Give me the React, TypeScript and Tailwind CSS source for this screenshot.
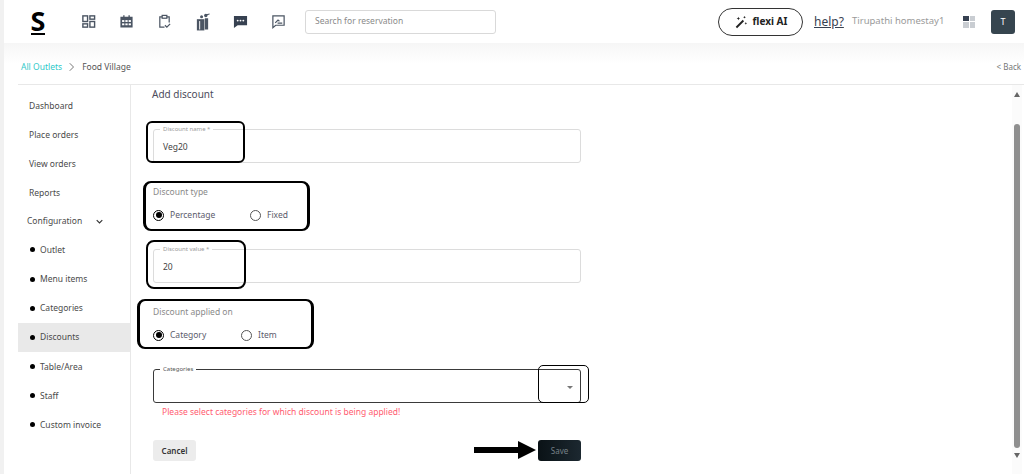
import React from "react";

const font = { fontFamily: '"Noto Sans", sans-serif' };

function Fieldset({ label, value, dark }: { label: string; value?: string; dark?: boolean }) {
  return (
    <div className={`relative h-[34px] w-[428px] rounded-[3px] border ${dark ? "border-[#3a3a3a]" : "border-[#dcdcdc]"}`}>
      <span className={`absolute -top-[5px] left-[6px] bg-white px-[3px] text-[6px] leading-[8px] ${dark ? "text-[#555]" : "text-[#9a9a9a]"}`}>{label}</span>
      {value && <span className="absolute left-[9px] top-[11px] text-[8.5px] leading-[12px] text-[#444]">{value}</span>}
      {dark && <span className="absolute right-[7px] top-[16px] h-0 w-0 border-x-[3px] border-t-[3px] border-x-transparent border-t-[#777]" />}
    </div>
  );
}

function Radio({ label, on, w }: { label: string; on?: boolean; w: string }) {
  return (
    <div className={`flex items-center gap-[6px] ${w}`}>
      <span className={`flex h-[11px] w-[11px] items-center justify-center rounded-full border ${on ? "border-black" : "border-[#555]"}`}>
        {on && <span className="h-[6px] w-[6px] rounded-full bg-black" />}
      </span>
      <span className="text-[8.5px] leading-[12px] text-[#5b5b6b]">{label}</span>
    </div>
  );
}

function RadioGroup({ title, a, b, w }: { title: string; a: string; b: string; w: string }) {
  return (
    <div className="flex h-[50px] flex-col">
      <div className="mt-[5px] text-[8.5px] leading-[12px] text-[#8a8a8a]">{title}</div>
      <div className="mt-[11px] flex items-center">
        <Radio label={a} on w={w} />
        <Radio label={b} w="w-auto" />
      </div>
    </div>
  );
}

function Nav({ label, dot, active }: { label: string; dot?: boolean; active?: boolean }) {
  return (
    <div className={`flex h-[29.2px] items-center ${active ? "bg-[#e9e9e9]" : ""} ${dot ? "pl-[12px]" : "pl-[11px]"}`}>
      {dot && <span className="mr-[5px] h-[5px] w-[5px] rounded-full bg-black" />}
      <span className="text-[8.5px] leading-[12px] text-[#4a4a4a]">{label}</span>
    </div>
  );
}

function Note({ className }: { className: string }) {
  return <div className={`pointer-events-none absolute border-black ${className}`} />;
}

const icon = "h-[15px] w-[15px] text-[#4b5563]";

export default function App() {
  return (
    <div className="relative h-[474px] w-[1024px] overflow-hidden bg-white" style={font}>
      <div className="flex h-full flex-col border-l-[4px] border-[#f1f1f1]">
        <header className="flex h-[43px] items-center">
          <div className="ml-[24px] flex w-[20px] flex-col items-center">
            <span className="text-[27px] font-bold leading-[24px] text-black">S</span>
            <span className="h-[2px] w-[14px] bg-black" />
          </div>
          <div className="ml-[33px] flex items-center gap-[23px]">
            <svg viewBox="0 0 16 16" className={icon} fill="none" stroke="currentColor" strokeWidth="1.5"><rect x="2" y="2" width="5" height="6" /><rect x="9.5" y="2" width="5" height="3.5" /><rect x="2" y="10.5" width="5" height="3.5" /><rect x="9.5" y="8" width="5" height="6" /></svg>
            <svg viewBox="0 0 16 16" className={icon} fill="currentColor"><path d="M1.5 3h3V1.2h1.4V3h4.2V1.2h1.4V3h3v11.5h-13z" /><g fill="#fff"><rect x="3.3" y="6.5" width="2.4" height="2" /><rect x="6.8" y="6.5" width="2.4" height="2" /><rect x="10.3" y="6.5" width="2.4" height="2" /><rect x="3.3" y="10" width="2.4" height="2" /><rect x="6.8" y="10" width="2.4" height="2" /><rect x="10.3" y="10" width="2.4" height="2" /></g></svg>
            <svg viewBox="0 0 16 16" className={icon} fill="none" stroke="currentColor" strokeWidth="1.3"><path d="M5.5 3H3v11h5M10.5 3H13v6" /><rect x="5.5" y="1.5" width="5" height="3" /><path d="M8.5 12l2 2 3.5-3.5" /></svg>
            <svg viewBox="0 0 16 20" className="h-[20px] w-[15px] text-[#4b5563]" fill="currentColor"><rect x="2" y="7" width="8" height="12" /><circle cx="7" cy="4.5" r="1.6" /><circle cx="11.5" cy="3" r="1.8" /><rect x="10.5" y="6" width="3.5" height="12" /><path d="M11 2l4.5-1.2v1.2l-4.5 1.2z" /><rect x="4.5" y="9" width="1" height="9" fill="#fff" /></svg>
            <svg viewBox="0 0 16 16" className="h-[15px] w-[15px] text-[#374151]" fill="currentColor"><path d="M1 2h14v10H5l-4 3z" /><g fill="#fff"><circle cx="5" cy="7" r="1" /><circle cx="8" cy="7" r="1" /><circle cx="11" cy="7" r="1" /></g></svg>
            <svg viewBox="0 0 16 16" className={icon} fill="none" stroke="currentColor" strokeWidth="1.3"><path d="M2 2h12v10H5l-3 2.5z" /><path d="M4.5 9.5l3-3 1.5 1.2M7 9.7h5" /></svg>
          </div>
          <div className="ml-[19px] flex h-[24px] w-[191px] items-center rounded-[3px] border border-[#d9d9d9] pl-[9px] text-[8.5px] text-[#8a8a8a]">Search for reservation</div>
          <div className="ml-[222px] flex h-[28px] w-[85px] items-center justify-center gap-[5px] rounded-full border border-[#333] text-[10px] font-bold text-[#222]">
            <svg viewBox="0 0 16 16" className="h-[14px] w-[14px]" fill="#222"><path d="M2 13.5L10 5.5l1.5 1.5-8 8z" /><path d="M5 2l.6 1.4L7 4l-1.4.6L5 6l-.6-1.4L3 4l1.4-.6zM12 1l.5 1 1 .5-1 .5-.5 1-.5-1-1-.5 1-.5zM13.5 8l.5 1 1 .5-1 .5-.5 1-.5-1-1-.5 1-.5z" /></svg>
            <span>flexi AI</span>
          </div>
          <span className="ml-[11px] w-[29px] text-[12px] text-[#374151] underline">help?</span>
          <span className="ml-[9px] w-[93px] whitespace-nowrap text-[9.5px] text-[#9a9a9a]">Tirupathi homestay1</span>
          <div className="ml-[18px] grid h-[12px] w-[12px] grid-cols-2 gap-[1px]">
            <span className="bg-[#374151]" /><span className="bg-[#c9cdd2]" /><span className="bg-[#c9cdd2]" /><span className="bg-[#c9cdd2]" />
          </div>
          <div className="ml-[16px] flex h-[24px] w-[24px] items-center justify-center rounded-[3px] bg-[#36454f] text-[9px] text-white">T</div>
        </header>

        <div className="flex h-[41px] items-end justify-between bg-gradient-to-b from-[#f6f6f6] to-white to-50% pb-[11px] pl-[17px] pr-[3px]">
          <div className="flex items-center text-[8.5px] leading-[12px]">
            <span className="text-[#2fc9c9]">All Outlets</span>
            <svg viewBox="0 0 8 12" className="mx-[7px] h-[10px] w-[6px]" fill="none" stroke="#666" strokeWidth="1.2"><path d="M1 1l5 5-5 5" /></svg>
            <span className="text-[#555]">Food Village</span>
          </div>
          <span className="text-[8px] leading-[12px] text-[#777]">&lt; Back</span>
        </div>

        <div className="ml-[14px] flex min-h-0 flex-1 border-t border-[#e8e8e8]">
          <aside className="w-[113px] shrink-0 border-r border-[#e8e8e8] pt-[6px]">
            <Nav label="Dashboard" />
            <Nav label="Place orders" />
            <Nav label="View orders" />
            <Nav label="Reports" />
            <div className="flex h-[27.5px] items-center pl-[9px] text-[8.5px] text-[#4a4a4a]">
              <span>Configuration</span>
              <svg viewBox="0 0 10 6" className="ml-[14px] h-[5px] w-[7px]" fill="none" stroke="#333" strokeWidth="1.6"><path d="M1 1l4 4 4-4" /></svg>
            </div>
            <Nav dot label="Outlet" />
            <Nav dot label="Menu items" />
            <Nav dot label="Categories" />
            <Nav dot active label="Discounts" />
            <Nav dot label="Table/Area" />
            <Nav dot label="Staff" />
            <Nav dot label="Custom invoice" />
          </aside>

          <main className="flex min-w-0 flex-1 flex-col pl-[22px]">
            <h1 className="-ml-[1px] mt-[3px] text-[10px] font-normal leading-[13px] text-[#4b4b5b]">Add discount</h1>
            <div className="mt-[28px]"><Fieldset label="Discount name *" value="Veg20" /></div>
            <div className="mt-[18px]"><RadioGroup title="Discount type" a="Percentage" b="Fixed" w="w-[97px]" /></div>
            <div className="mt-[18px]"><Fieldset label="Discount value *" value="20" /></div>
            <div className="mt-[18px]"><RadioGroup title="Discount applied on" a="Category" b="Item" w="w-[88px]" /></div>
            <div className="mt-[18px]"><Fieldset label="Categories" dark /></div>
            <div className="mt-[3px] pl-[9px] text-[8.5px] leading-[12px] text-[#ff5c70]">Please select categories for which discount is being applied!</div>
            <div className="mt-[22px] flex w-[428px] items-center justify-between">
              <button className="h-[21px] w-[43px] rounded-[3px] bg-[#ececec] text-[8px] font-semibold text-[#333]">Cancel</button>
              <button className="h-[21px] w-[43px] rounded-[3px] bg-gradient-to-r from-[#0a1216] to-[#1c2830] text-[8px] text-[#778087]">Save</button>
            </div>
          </main>

          <div className="mr-[2px] flex w-[10px] shrink-0 flex-col items-center bg-[#fbfbfb] pb-[16px] pt-[7px]">
            <span className="h-0 w-0 border-x-[3.5px] border-b-[5px] border-x-transparent border-b-[#666]" />
            <span className="mt-[27px] w-[6px] flex-1 rounded-full bg-[#8f8f8f]" />
            <span className="mt-[5px] h-0 w-0 border-x-[3.5px] border-t-[5px] border-x-transparent border-t-[#666]" />
          </div>
        </div>
      </div>

      <Note className="left-[146px] top-[121px] h-[42px] w-[99px] rounded-[6px] border-2" />
      <Note className="left-[143px] top-[181px] h-[50px] w-[167px] rounded-[8px] border-y-2 border-x-[3px]" />
      <Note className="left-[146px] top-[240px] h-[49px] w-[100px] rounded-[8px] border-2" />
      <Note className="left-[137px] top-[299px] h-[50px] w-[177px] rounded-[8px] border-y-2 border-x-[3px]" />
      <Note className="left-[538px] top-[365px] h-[38px] w-[51px] rounded-[5px] border" />
      <svg viewBox="0 0 62 18" className="pointer-events-none absolute left-[474px] top-[441px] h-[18px] w-[62px]" fill="#000"><path d="M0 6h44V0l18 9-18 9v-6H0z" /></svg>
    </div>
  );
}
